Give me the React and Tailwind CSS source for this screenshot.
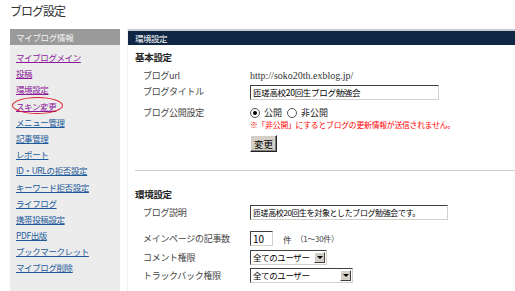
const font = { fontFamily: '"Noto Sans CJK JP", "Noto Sans", sans-serif' };

const links = [
  { label: 'マイブログメイン', visited: true },
  { label: '投稿', visited: true },
  { label: '環境設定', visited: true },
  { label: 'スキン変更', visited: true, circled: true },
  { label: 'メニュー管理' },
  { label: '記事管理' },
  { label: 'レポート' },
  { label: 'ID・URLの拒否設定' },
  { label: 'キーワード拒否設定' },
  { label: 'ライフログ' },
  { label: '携帯投稿設定' },
  { label: 'PDF出版' },
  { label: 'ブックマークレット' },
  { label: 'マイブログ削除' },
];

function Select({ value, width }) {
  return (
    <div className={`flex h-[15px] items-stretch border border-t-[#404040] border-l-[#404040] border-b-[#d4d0c8] border-r-[#d4d0c8] bg-white ${width}`}>
      <span className="flex-1 overflow-hidden whitespace-nowrap pl-[2px] text-[8.5px] leading-[13px] tracking-[-0.4px] text-black">{value}</span>
      <span className="m-[1px] flex w-[11px] items-center justify-center border border-t-white border-l-white border-b-[#404040] border-r-[#404040] bg-[#d4d0c8]">
        <span className="h-0 w-0 border-x-[3px] border-t-[3px] border-x-transparent border-t-black" />
      </span>
    </div>
  );
}

function Input({ value, width, text = 'text-[8.5px] tracking-[-0.3px]' }) {
  return (
    <div className={`h-[15px] overflow-hidden whitespace-nowrap border border-t-[#404040] border-l-[#404040] border-b-[#d4d0c8] border-r-[#d4d0c8] bg-white pl-[2px] leading-[13px] text-black ${text} ${width}`}>
      {value}
    </div>
  );
}

function Row({ label, className, children }) {
  return (
    <div className={`flex items-center whitespace-nowrap ${className}`}>
      <div className="w-[115px] pl-[8px] text-[9px] leading-[12px] tracking-[-0.3px] text-[#444]">{label}</div>
      <div className="flex items-center">{children}</div>
    </div>
  );
}

export default function App() {
  return (
    <div className="h-[291px] w-[515px] overflow-hidden bg-white" style={font}>
      <h1 className="h-[29px] whitespace-nowrap pl-[10px] pt-[4px] text-[12px] leading-[14px] tracking-[-1px] text-[#333]">ブログ設定</h1>
      <div className="flex">
        <aside className="ml-[10px] h-[262px] w-[110px] bg-[#ececec]">
          <div className="h-[16px] whitespace-nowrap bg-[#9a9a9a] pl-[6px] text-[8.5px] leading-[16px] tracking-[-0.3px] text-[#f4f4f4]">マイブログ情報</div>
          <ul className="pt-[4px] pl-[6px]">
            {links.map((l) => (
              <li key={l.label} className="relative h-[16.2px] whitespace-nowrap text-[8.5px] leading-[16px] tracking-[-0.4px]">
                <a className={`underline ${l.visited ? 'text-[#8a1a9a]' : 'text-[#1a5a9a]'}`}>{l.label}</a>
                {l.circled && (
                  <span className="absolute left-[-4px] top-[-1px] h-[17px] w-[51px] rounded-[50%] border border-[#e0202a]" />
                )}
              </li>
            ))}
          </ul>
        </aside>

        <main className="ml-[7px] flex-1 border-l border-[#f0f0f0]">
          <div className="h-[16px] whitespace-nowrap border-t-2 border-[#c8ccd2] bg-[#0f2744] pl-[7px] text-[8.5px] leading-[14px] tracking-[-0.5px] text-white">環境設定</div>
          <div className="pl-[7px]">
            <div className="mt-[5px] h-[14px] text-[9.5px] leading-[14px] tracking-[-0.3px] font-bold text-[#222]">基本設定</div>

            <Row label="ブログurl" className="mt-[4px] h-[16px]">
              <span className="text-[10px] leading-[12px] text-[#333]" style={{ fontFamily: '"Liberation Serif", serif' }}>http://soko20th.exblog.jp/</span>
            </Row>
            <Row label="ブログタイトル" className="h-[16px]">
              <Input value="匝瑳高校20回生ブログ勉強会" width="w-[189px]" />
            </Row>
            <Row label="ブログ公開設定" className="mt-[7px] h-[12px]">
              <span className="flex h-[10px] w-[10px] items-center justify-center rounded-full border border-[#555] bg-white">
                <span className="h-[4px] w-[4px] rounded-full bg-black" />
              </span>
              <span className="ml-[4px] text-[9px] leading-[12px] text-[#222]">公開</span>
              <span className="ml-[5px] h-[10px] w-[10px] rounded-full border border-[#555] bg-white" />
              <span className="ml-[4px] text-[9px] leading-[12px] text-[#222]">非公開</span>
            </Row>
            <div className="ml-[115px] h-[11px] whitespace-nowrap text-[7.8px] leading-[11px] tracking-[-0.2px] text-[#ff0000]">※「非公開」にするとブログの更新情報が送信されません。</div>
            <div className="ml-[115px] mt-[5px] flex h-[17px] w-[27px] items-center justify-center border border-t-white border-l-white border-b-[#222] border-r-[#222] bg-[#d4d0c8] text-[9.5px] leading-[12px] text-black shadow-[inset_-1px_-1px_0_#808080]">変更</div>

            <div className="mt-[18px] h-px bg-[#cfcfcf]" />

            <div className="mt-[16px] h-[14px] text-[9.5px] leading-[14px] tracking-[-0.3px] font-bold text-[#222]">環境設定</div>
            <Row label="ブログ説明" className="mt-[4px] h-[15px]">
              <Input value="匝瑳高校20回生を対象としたブログ勉強会です。" width="w-[198px]" text="text-[8px] tracking-[-0.4px]" />
            </Row>
            <Row label="メインページの記事数" className="mt-[11px] h-[15px]">
              <Input value="10" width="w-[23px]" text="text-[10px]" />
              <span className="ml-[10px] text-[8.5px] leading-[12px] text-[#444]">件</span>
              <span className="ml-[4px] text-[8px] leading-[12px] tracking-[-0.3px] text-[#444]">（1～30件）</span>
            </Row>
            <Row label="コメント権限" className="mt-[4px] h-[15px]">
              <Select value="全てのユーザー" width="w-[77px]" />
            </Row>
            <Row label="トラックバック権限" className="mt-[3px] h-[15px]">
              <Select value="全てのユーザー" width="w-[103px]" />
            </Row>
          </div>
        </main>
      </div>
    </div>
  );
}
